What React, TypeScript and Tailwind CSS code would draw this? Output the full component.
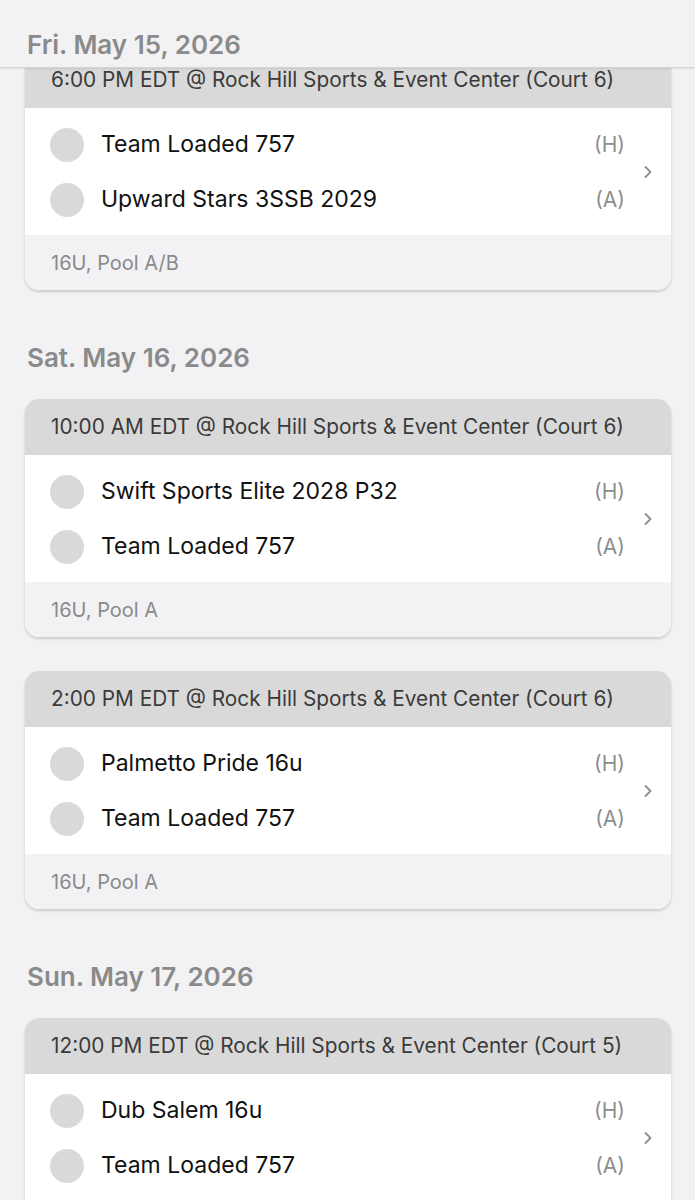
import React from "react";

type Game = {
  time: string;
  home: string;
  away: string;
  pool: string;
};

type Day = {
  date: string;
  games: Game[];
};

const venue = "Rock Hill Sports & Event Center";

const days: Day[] = [
  {
    date: "Sat. May 16, 2026",
    games: [
      { time: `10:00 AM EDT @ ${venue} (Court 6)`, home: "Swift Sports Elite 2028 P32", away: "Team Loaded 757", pool: "16U, Pool A" },
      { time: `2:00 PM EDT @ ${venue} (Court 6)`, home: "Palmetto Pride 16u", away: "Team Loaded 757", pool: "16U, Pool A" },
    ],
  },
  {
    date: "Sun. May 17, 2026",
    games: [
      { time: `12:00 PM EDT @ ${venue} (Court 5)`, home: "Dub Salem 16u", away: "Team Loaded 757", pool: "16U, Pool A" },
    ],
  },
];

const firstGame: Game = {
  time: `6:00 PM EDT @ ${venue} (Court 6)`,
  home: "Team Loaded 757",
  away: "Upward Stars 3SSB 2029",
  pool: "16U, Pool A/B",
};

const Chevron = () => (
  <svg width="10" height="16" viewBox="0 0 10 16" fill="none">
    <path d="M2.5 3L7.5 8L2.5 13" stroke="#8e8e8e" strokeWidth="1.8" strokeLinecap="round" strokeLinejoin="round" />
  </svg>
);

const TeamRow = ({ name, side }: { name: string; side: string }) => (
  <div className="flex items-center h-[55px]">
    <span className="w-[34px] h-[34px] rounded-full bg-[#d9d9d9] shrink-0"></span>
    <span className="ml-[17px] flex-1 text-[23px] text-[#111111] truncate">{name}</span>
    <span className="text-[21px] text-[#8e8e8e]">{side}</span>
  </div>
);

const GameCard = ({ game }: { game: Game }) => (
  <div className="rounded-[14px] overflow-hidden bg-white shadow-[0_2px_3px_rgba(0,0,0,0.16)]">
    {/* Time and venue */}
    <div className="h-[56px] flex items-center pl-[26px] bg-[#d9d9d9] text-[20.8px] text-[#3b3b3b] whitespace-nowrap">
      {game.time}
    </div>

    {/* Teams */}
    <div className="flex bg-white pt-[9px] pb-[8px]">
      <div className="flex-1 pl-[25px]">
        <TeamRow name={game.home} side="(H)" />
        <TeamRow name={game.away} side="(A)" />
      </div>
      <div className="w-[46px] flex items-center justify-center">
        <Chevron />
      </div>
    </div>

    {/* Division */}
    <div className="h-[55px] flex items-center pl-[26px] bg-[#f2f2f4] text-[20px] text-[#8a8a8a]">
      {game.pool}
    </div>
  </div>
);

const App: React.FC = () => {
  return (
    <div className="min-h-[1200px] bg-[#f2f2f4] font-['Inter',sans-serif] overflow-hidden">
      {/* Sticky day header */}
      <div className="relative z-10 h-[68px] pt-[29px] pl-[27px] bg-[#f2f2f4] border-b border-[#d4d4d6] shadow-[0_1px_2px_rgba(0,0,0,0.08)]">
        <h2 className="text-[26px] leading-[32px] font-semibold text-[#8a8a8a]">Fri. May 15, 2026</h2>
      </div>

      {/* First card, scrolled partly under the header */}
      <div className="pl-[25px] pr-[24px] pb-[3px] mb-[31px] overflow-hidden">
        <div className="-mt-[16px]">
          <GameCard game={firstGame} />
        </div>
      </div>

      {days.map((day) => (
        <section key={day.date}>
          <div className="h-[75px] pt-[18px] pl-[27px]">
            <h2 className="text-[26px] leading-[32px] font-semibold text-[#8a8a8a]">{day.date}</h2>
          </div>
          <div className="pl-[25px] pr-[24px] flex flex-col gap-[34px] mb-[34px]">
            {day.games.map((g) => (
              <GameCard key={g.time} game={g} />
            ))}
          </div>
        </section>
      ))}
    </div>
  );
};

export default App;
